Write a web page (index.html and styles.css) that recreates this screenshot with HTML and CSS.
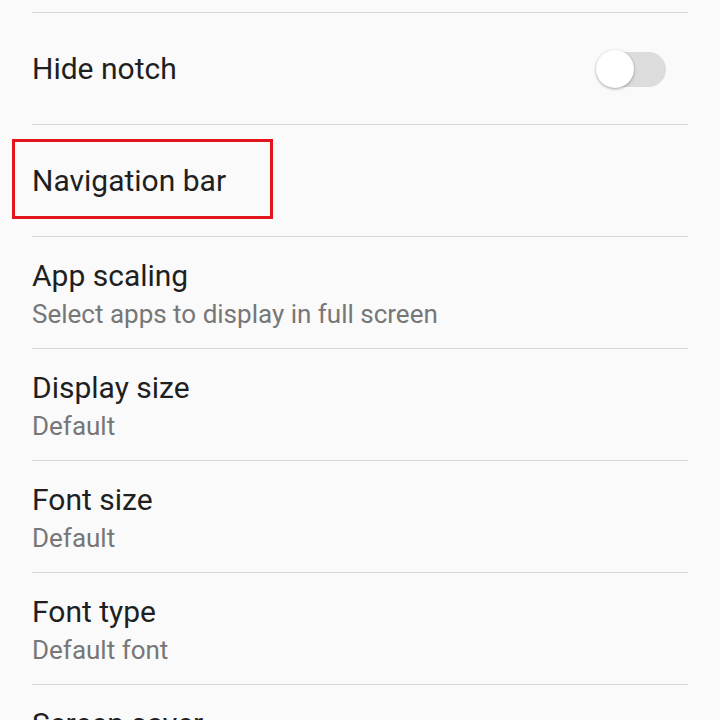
FILE: index.html
```html
<!DOCTYPE html>
<html lang="en">
<head>
<meta charset="utf-8">
<title>Display settings</title>
<link rel="stylesheet" href="styles.css">
</head>
<body>
<div class="list">
  <div class="row row-top"></div>
  <div class="row">
    <div class="text"><div class="title">Hide notch</div></div>
    <div class="switch"><span class="track"></span><span class="knob"></span></div>
  </div>
  <div class="row row-marked">
    <div class="text"><div class="title">Navigation bar</div></div>
    <div class="highlight"></div>
  </div>
  <div class="row two">
    <div class="text"><div class="title">App scaling</div><div class="sub">Select apps to display in full screen</div></div>
  </div>
  <div class="row two">
    <div class="text"><div class="title">Display size</div><div class="sub">Default</div></div>
  </div>
  <div class="row two">
    <div class="text"><div class="title">Font size</div><div class="sub">Default</div></div>
  </div>
  <div class="row two">
    <div class="text"><div class="title">Font type</div><div class="sub">Default font</div></div>
  </div>
  <div class="row two last">
    <div class="text"><div class="title">Screen saver</div></div>
  </div>
</div>
</body>
</html>
```

FILE: styles.css
```css
html, body {
  margin: 0;
  padding: 0;
  background: #fafafa;
  height: 720px;
  overflow: hidden;
}
body {
  font-family: Roboto, "Noto Sans", sans-serif;
}
.list {
  display: flex;
  flex-direction: column;
  padding: 0 32px;
}
.row {
  position: relative;
  box-sizing: border-box;
  height: 112px;
  border-bottom: 1px solid #d9d9d9;
  display: flex;
  align-items: center;
  flex-shrink: 0;
}
.row-top {
  height: 13px;
}
.row.two {
  align-items: flex-start;
  padding-top: 21px;
}
.row.last {
  border-bottom: none;
}
.text {
  flex: 1;
}
.title {
  font-size: 30px;
  line-height: 36px;
  color: #1f1f1f;
}
.sub {
  font-size: 26px;
  line-height: 36px;
  margin-top: 2px;
  color: #777777;
}
.switch {
  position: relative;
  width: 70px;
  height: 40px;
  margin-right: 22px;
  display: flex;
  align-items: center;
}
.track {
  position: absolute;
  left: 2px;
  right: 0;
  top: 3px;
  height: 35px;
  border-radius: 18px;
  background: #dcdcdc;
}
.knob {
  position: absolute;
  left: 0;
  top: 1px;
  width: 38px;
  height: 38px;
  border-radius: 50%;
  background: #ffffff;
  box-shadow: 0 1px 3px rgba(0,0,0,0.35);
}
.highlight {
  position: absolute;
  left: -20px;
  top: 14px;
  width: 255px;
  height: 74px;
  border: 3px solid #e2151d;
}
```
